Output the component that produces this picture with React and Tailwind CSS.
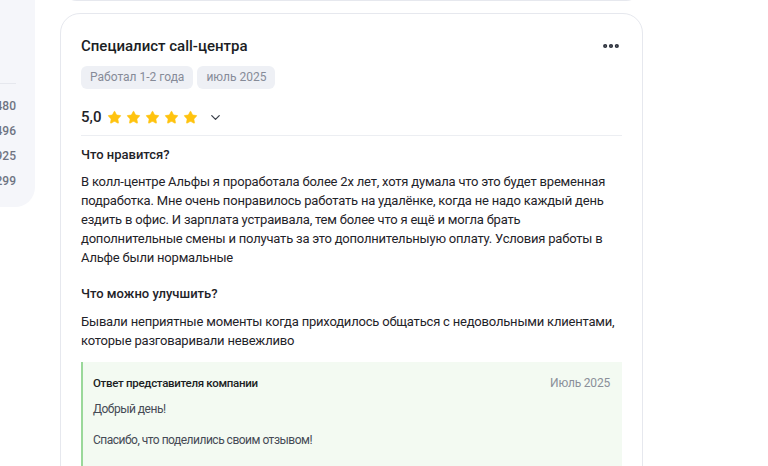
import { Star, ChevronDown, MoreHorizontal } from "lucide-react";

function Stars() {
  return (
    <div className="flex items-center gap-[4px]">
      {[1, 2, 3, 4, 5].map((i) => (
        <Star key={i} size={15} className="fill-[#ffc30f] text-[#ffc30f]" strokeWidth={1} />
      ))}
    </div>
  );
}

export default function App() {
  return (
    <div className="w-[768px] h-[466px] overflow-hidden bg-white flex font-[Roboto,sans-serif] text-[#1f2329]">
      {/* боковая панель */}
      <div className="w-[35px] h-[207px] shrink-0 bg-[#f5f6fa] rounded-br-[20px] pt-[83px] pr-[19px] flex flex-col items-end">
        <div className="w-full h-px bg-[#e6e8ee]" />
        <div className="mt-[14px] flex flex-col items-end gap-[8px] text-[12px] leading-[17px] text-[#6f7482] font-medium">
          <span>480</span>
          <span>496</span>
          <span>925</span>
          <span>299</span>
        </div>
      </div>

      <div className="ml-[25px] w-[583px] shrink-0 flex flex-col">
        {/* предыдущая карточка */}
        <div className="h-[4px] -mt-[16px] pt-[16px] box-content border border-t-0 border-[#e6e8ee] rounded-b-[20px]" />

        {/* карточка отзыва */}
        <div className="mt-[12px] border border-[#e6e8ee] rounded-[20px] px-[20px] pt-[22px] pb-[40px] flex-1">
          <div className="flex items-center justify-between">
            <h2 className="text-[15px] leading-[20px] font-medium text-[#1b1e24]">Специалист call-центра</h2>
            <MoreHorizontal size={20} strokeWidth={3} className="text-[#2a2f3a] mr-[1px]" />
          </div>

          <div className="mt-[10px] flex gap-[4px]">
            <span className="h-[23px] px-[9px] rounded-[6px] bg-[#eef0f5] text-[12px] leading-[23px] text-[#868b98]">
              Работал 1-2 года
            </span>
            <span className="h-[23px] px-[9px] rounded-[6px] bg-[#eef0f5] text-[12px] leading-[23px] text-[#868b98]">
              июль 2025
            </span>
          </div>

          <div className="mt-[18px] flex items-center">
            <span className="text-[15px] leading-[20px] font-medium mr-[6px]">5,0</span>
            <Stars />
            <ChevronDown size={15} strokeWidth={2} className="ml-[10px] text-[#3a3f4a]" />
          </div>

          <div className="mt-[8px] h-px bg-[#eceef2]" />

          <h3 className="mt-[10px] text-[13px] leading-[18px] font-medium">Что нравится?</h3>
          <p className="mt-[8px] text-[13px] leading-[19px] tracking-[-0.2px]">
            В колл-центре Альфы я проработала более 2х лет, хотя думала что это будет временная
            подработка. Мне очень понравилось работать на удалёнке, когда не надо каждый день
            ездить в офис. И зарплата устраивала, тем более что я ещё и могла брать
            дополнительные смены и получать за это дополнительныую оплату. Условия работы в
            Альфе были нормальные
          </p>

          <h3 className="mt-[18px] text-[13px] leading-[18px] font-medium">Что можно улучшить?</h3>
          <p className="mt-[9px] text-[13px] leading-[19px] tracking-[-0.2px]">
            Бывали неприятные моменты когда приходилось общаться с недовольными клиентами,
            которые разговаривали невежливо
          </p>

          <div className="mt-[12px] bg-[#f3faf2] border-l-2 border-[#9ad89a] pl-[10px] pr-[12px] pt-[13px] pb-[30px]">
            <div className="flex items-center justify-between">
              <span className="text-[11.5px] leading-[16px] font-medium text-[#1b1e24] tracking-[-0.3px]">
                Ответ представителя компании
              </span>
              <span className="text-[12px] leading-[16px] text-[#8a8f99] tracking-[-0.2px]">Июль 2025</span>
            </div>
            <p className="mt-[10px] text-[12px] leading-[16px] text-[#454a55] tracking-[-0.5px]">Добрый день!</p>
            <p className="mt-[15px] text-[12px] leading-[16px] text-[#454a55] tracking-[-0.5px]">
              Спасибо, что поделились своим отзывом!
            </p>
          </div>
        </div>
      </div>
    </div>
  );
}
